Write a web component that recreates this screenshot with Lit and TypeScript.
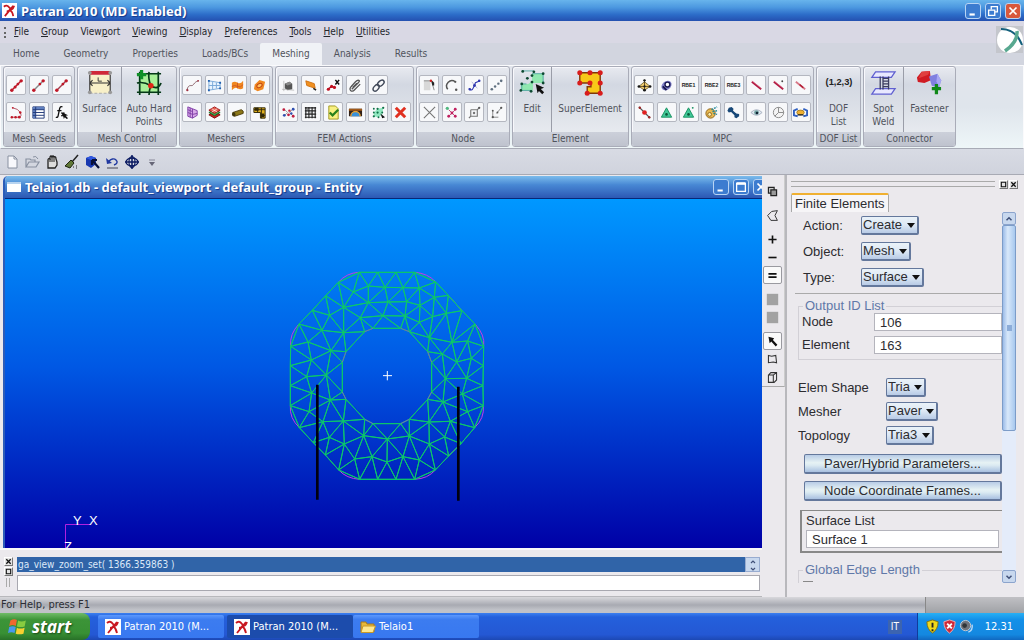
import { LitElement, html, svg, css, nothing } from "lit";
import { customElement, property } from "lit/decorators.js";
import { classMap } from "lit/directives/class-map.js";

const seed = (mid: string) => svg`<path d="M3 13L13 3" stroke=${mid} stroke-width="1.5"/><g fill="#c01828"><circle cx="3" cy="13" r="1.8"/><circle cx="13" cy="3" r="1.8"/><circle cx="9.5" cy="6.5" r="1.5"/></g>`;
const rod = svg`<path d="M3 4L13 12" stroke="#b01840" stroke-width="2"/><path d="M3 3L13 11" stroke="#e07890" stroke-width=".6"/>`;
const triangle = svg`<path d="M8 3L13.500 13H2.500Z" fill="#40c898" stroke="#189060"/><circle cx="8" cy="10" r="1.400" fill="#085838"/>`;
const rbe = (n: string) => svg`<text x="8" y="10" text-anchor="middle" font-size="5.500" font-weight="700" fill="#222">RBE${n}</text>`;

const icons: Record<string, unknown> = {
  seed1: svg`${seed("#c01828")}<circle cx="6.500" cy="9.500" r="1.600" fill="#c01828"/>`,
  seed2: seed("#888"),
  seed3: seed("#a04050"),
  seedCurve: svg`<path d="M4 3Q10 4 12 8T11 13H3" fill="none" stroke="#b05060"/><g fill="#c01828"><circle cx="4" cy="3" r="1"/><circle cx="12" cy="8" r="1.300"/><circle cx="11" cy="13" r="1.500"/><circle cx="7" cy="13" r="1.300"/><circle cx="3" cy="13" r="1.300"/></g>`,
  table: svg`<path d="M2 2H14V14H2Z" fill="#fff" stroke="#203878"/><path d="M2 2H14V5H2ZM2 5H5V14H2Z" fill="#6080c0"/><path d="M2 5H14M2 8H14M2 11H14M5 2V14" stroke="#203878"/>`,
  fx: svg`<path d="M9 2Q6.500 1 6 4L4.500 11Q4 14 2 13M3.500 6H8M8 8L11 12M11 8L8 12" fill="none" stroke="#111" stroke-width="1.400"/><path d="M9 8L15 11L12.500 11.500L15 14L13.500 15L11.500 13L10.500 15Z" fill="#111"/>`,
  curve: svg`<path d="M2 13C4 5 7 10 9 7S12 4 14 3" fill="none" stroke="#886068"/><circle cx="2.500" cy="13" r="1.200" fill="#a03040"/><circle cx="14" cy="3" r="1" fill="#a03040"/>`,
  meshBlue: svg`<path d="M2 3L14 5V11L2 13ZM6 4V12M10 5V11M2 8H14" fill="#e8f4ff" stroke="#78a8d8"/><path d="M1 2h2v2H1ZM13 4h2v2h-2ZM13 10h2v2h-2ZM1 12h2v2H1Z" fill="#2060b0"/>`,
  sheet: svg`<path d="M2 5Q5 3 8 5T14 3V11Q11 13 8 11T2 13Z" fill="#f08820"/><path d="M2 9Q5 7 8 9T14 7M8 5V11" stroke="#d05820" fill="none"/>`,
  sheet2: svg`<path d="M3 7L8 2L14 4L12 12L6 14L2 12Z" fill="#f08820"/><ellipse cx="8" cy="8" rx="3" ry="2" fill="#ffc060" stroke="#c04010" transform="rotate(-30 8 8)"/>`,
  extrude: svg`<path d="M3 2L8 4V14L3 12ZM8 4L13 6V11L8 14" fill="#d8a8e8" stroke="#8040a8"/><path d="M3 5L8 7M3 8L8 10L13 9M5.500 3V13" stroke="#8040a8"/>`,
  layers: svg`<path d="M8 7L14 10.500L8 14L2 10.500Z" fill="#c82020" stroke="#801010"/><path d="M8 4.500L14 8L8 11.500L2 8Z" fill="#40a850" stroke="#186020"/><path d="M8 2L14 5.500L8 9L2 5.500Z" fill="#e86050" stroke="#a01818"/><path d="M5 4L11 7.500M11 4L5 7.500" stroke="#fff" stroke-width=".7"/>`,
  tube: svg`<path d="M3 8L12 5Q15 6 14 9L5 12Q2 11 3 8Z" fill="#8c7818" stroke="#504010"/><ellipse cx="4" cy="10" rx="1.800" ry="2.200" fill="#403810"/>`,
  bracket: svg`<path d="M2 3H14V14H9V8H2Z" fill="#e0b020" stroke="#302808"/><path d="M2 5H14M6 3V8M10 3V14M9 11H14" stroke="#302808"/><path d="M3 3H7V6H3ZM10 9H13V13H10Z" fill="#302808"/>`,
  cube: svg`<path d="M4 6L9 4L12 6V12L7 13L4 11Z" fill="#555"/><path d="M4 6L9 4L12 6L7 8Z" fill="#888"/><path d="M3 3V14M1 12L14 13" stroke="#aaa" stroke-width=".7"/>`,
  plate: svg`<path d="M3 3L12 6L13 11L4 8Z" fill="#f09020" stroke="#d07010"/><path d="M11 11L14 13" stroke="#222" stroke-width="1.500"/>`,
  moveNode: svg`<path d="M2 12L6 9L9 10" stroke="#a01020" stroke-width="1.500" fill="none"/><g fill="#c01020"><circle cx="2.500" cy="12" r="1.700"/><circle cx="6" cy="9" r="1.700"/><circle cx="9" cy="10" r="1.700"/></g><path d="M10 2L14 7M14 2L10 7" stroke="#111" stroke-width="1.600"/>`,
  clip: svg`<path d="M4 12L11 5Q13 3 11.500 2.500T8 4L3.500 9Q1 12 3 13.500T7 12.500L13 6.500M5 10L9.500 5.500" fill="none" stroke="#555" stroke-width="1.400"/>`,
  link: svg`<ellipse cx="5.500" cy="10.500" rx="4" ry="2.500" transform="rotate(-50 5.500 10.500)" fill="none" stroke="#404858" stroke-width="1.500"/><ellipse cx="10.500" cy="5.500" rx="4" ry="2.500" transform="rotate(-40 10.500 5.500)" fill="none" stroke="#404858" stroke-width="1.500"/>`,
  scatter: svg`<path d="M4 5L7 8L4 11M12 5L9 8L12 11" stroke="#999" fill="none"/><g fill="#c02040"><circle cx="3" cy="5" r="1.500"/><circle cx="8" cy="10.500" r="1.500"/><circle cx="13" cy="12" r="1.500"/><circle cx="9" cy="6" r="1.300"/></g><g fill="#3050b0"><circle cx="13" cy="4.500" r="1.500"/><circle cx="3.500" cy="11" r="1.500"/><circle cx="11" cy="9" r="1.300"/></g>`,
  grid: svg`<path d="M3 2V14M6.300 2V14M9.700 2V14M13 2V14M2 3H14M2 6.300H14M2 9.700H14M2 13H14" stroke="#222" stroke-width="1.200"/><path d="M4 4h1v1H4ZM8 8h1v1H8Z" fill="#222"/>`,
  docCheck: svg`<path d="M3 1H10L13 4V15H3Z" fill="#f8f080" stroke="#a09820"/><path d="M4 8L7 11L13 5" fill="none" stroke="#28801c" stroke-width="2.400"/>`,
  rainbow: svg`<path d="M1 4H15V12H1Z" fill="#302018"/><path d="M3 12A5 5 0 0 1 13 12Z" fill="#3890d8"/><path d="M3 12A5 5 0 0 1 13 12" fill="none" stroke="#e8a030" stroke-width="1.500"/><path d="M1 4H15V6H1Z" fill="#a05818"/>`,
  cluster: svg`<path d="M3 8L7 4L13 3L12 10L8 13L3 12Z" fill="#90e8c0"/><g fill="#107048"><circle cx="3" cy="4" r="1"/><circle cx="7" cy="4" r="1.200"/><circle cx="13" cy="3" r="1.200"/><circle cx="3" cy="8" r="1"/><circle cx="7" cy="8" r="1.200"/><circle cx="12" cy="8" r="1"/><circle cx="3" cy="12" r="1.200"/><circle cx="8" cy="13" r="1"/></g><path d="M10 9L15 13L12 14Z" fill="#111"/>`,
  del: svg`<path d="M3 3L13 13M13 3L3 13" stroke="#e03020" stroke-width="3.200"/>`,
  nodeEdit: svg`<path d="M2 3H9V13H2Z" fill="#d8d8d8"/><path d="M2 3H10L13 13" stroke="#888" fill="none"/><path d="M10 2L13 5V8L11 8Z" fill="#222"/><circle cx="9.500" cy="3" r="1.300" fill="#d02020"/>`,
  arc: svg`<path d="M12 4Q8 1 4.500 4.500T4 12" fill="none" stroke="#555" stroke-width="1.600"/><circle cx="13" cy="12.500" r="1.300" fill="#555"/><circle cx="12" cy="4" r="1.200" fill="#555"/>`,
  spline: svg`<path d="M2 11Q5 15 7 10T9 5T14 3" fill="none" stroke="#3038b0" stroke-width="1.200"/><path d="M5 4L11 11" stroke="#99c" stroke-width=".7"/><g fill="#3038b0"><circle cx="3" cy="12" r="1.300"/><circle cx="8" cy="8" r="1.500"/><circle cx="13" cy="3" r="1.300"/></g>`,
  dots: svg`<g fill="#607080"><circle cx="3" cy="12" r="1.400"/><circle cx="6.500" cy="9" r="1.300"/><circle cx="10" cy="6" r="1.300"/><circle cx="13" cy="3" r="1.400"/></g>`,
  cross: svg`<path d="M2 2L14 14M14 2L2 14" stroke="#777" stroke-width="1.200"/>`,
  project: svg`<path d="M5 5L12 12M12 5L5 12" stroke="#c04070"/><g fill="#c02060"><circle cx="12" cy="4.500" r="1.500"/><circle cx="5" cy="12" r="1.500"/><circle cx="12" cy="12" r="1.500"/><circle cx="8.500" cy="8.500" r="1.500"/></g><circle cx="3.500" cy="3.500" r="1.700" fill="#50b880"/>`,
  surfNode: svg`<path d="M4 5H11L13 3M11 5V12H4V5M4 12L2 14" fill="none" stroke="#777" stroke-width="1.200"/><circle cx="7.500" cy="8.500" r="1.300" fill="#777"/><circle cx="13" cy="3" r="1.200" fill="#555"/>`,
  paramNode: svg`<path d="M4 6V13H10M8 9L13 3" fill="none" stroke="#888"/><g fill="#555"><circle cx="13" cy="3" r="1.200"/><circle cx="9" cy="8" r="1"/><circle cx="4" cy="13" r="1.200"/><circle cx="4" cy="6" r="1"/></g>`,
  diamond: svg`<path d="M8 4L14 9L8 13L2 9Z" fill="#f0cc70" stroke="#605020" stroke-width=".8"/><path d="M2 9H14M8 2V13" stroke="#403010" stroke-width=".8"/><g fill="#181818"><circle cx="2" cy="9" r="1.400"/><circle cx="14" cy="9" r="1.400"/><circle cx="8" cy="13" r="1.500"/><circle cx="8" cy="2.500" r="1.300"/><circle cx="8" cy="9" r="1.200"/></g>`,
  ring: svg`<ellipse cx="8" cy="8" rx="6" ry="4.500" transform="rotate(-40 8 8)" fill="#8080c8"/><circle cx="9" cy="7" r="2.600" fill="#fff" stroke="#181850" stroke-width="1.500"/><path d="M4 9L8 13" stroke="#181850" stroke-width="2"/>`,
  rbe1: rbe("1"), rbe2: rbe("2"), rbe3: rbe("3"),
  rod, rod2: svg`${rod}<circle cx="12" cy="3.500" r="1" fill="#444"/>`,
  rod3: svg`<path d="M3 4L13 12" stroke="#d87888" stroke-width="2"/><path d="M7 7L11 10.500" stroke="#b01830" stroke-width="1.500"/>`,
  link2: svg`<path d="M2 2L14 14" stroke="#555" stroke-width="1.500"/><circle cx="8" cy="8" r="2.500" fill="#e02020"/><circle cx="3" cy="3" r="1.300" fill="#a02828"/><circle cx="13" cy="13" r="1.300" fill="#a02828"/>`,
  tri1: triangle, tri2: svg`${triangle}<circle cx="12.500" cy="3" r="1" fill="#189060"/>`,
  gear: svg`<circle cx="7" cy="9" r="5" fill="#e8b850" stroke="#906820"/><circle cx="6" cy="10" r="2" fill="#fff0b0" stroke="#906820"/><path d="M8 5L14 2M9 7L15 6M10 9L14 10" stroke="#20889c" stroke-width="1.500" stroke-dasharray="2 1"/>`,
  bolt: svg`<path d="M3 3L6 2L8 4L7.500 6L11 9L14 9.500L14 12L11 14L9 13L9 11L5.500 7.500L3 8L1.500 6Z" fill="#184878"/>`,
  eye: svg`<path d="M2 8Q8 2 14 8Q8 14 2 8Z" fill="#e0e8f0" stroke="#a8b0c0"/><circle cx="8" cy="8" r="2.500" fill="#70a0a0"/><circle cx="8.500" cy="8.500" r="1.300" fill="#123"/>`,
  dial: svg`<circle cx="8" cy="8" r="5.500" fill="#f4f4f4" stroke="#888"/><path d="M8 2.500V8H13.500M8 8L4 12" stroke="#888" fill="none"/>`,
  joint: svg`<path d="M5 4L1 6V11L5 12M11 4L15 6V11L11 12" fill="none" stroke="#3060c0" stroke-width="2"/><ellipse cx="8" cy="8" rx="4" ry="2.600" fill="#f0b030" stroke="#907020" stroke-width=".8"/><path d="M5 10.500H11" stroke="#222" stroke-width="1.200"/>`,

  surface: svg`<path d="M3 5H25V25H3Z" fill="#f8f0c8"/><path d="M3 3H25" stroke="#d02838" stroke-width="4"/><path d="M3 5V25M25 5V25M3 14H25M6 11L3 14L6 17M22 11L25 14L22 17" fill="none" stroke="#333" stroke-width="1.200"/><path d="M3 25H25" stroke="#aaa" stroke-width="1.200" stroke-dasharray="3 2"/><path d="M12 8V12H16" stroke="#333" fill="none"/><g fill="#999"><circle cx="3" cy="3" r="2"/><circle cx="25" cy="3" r="2"/><circle cx="3" cy="24" r="2"/><circle cx="25" cy="24" r="2"/></g>`,
  hardpoint: svg`<path d="M3 4H25V25H3Z" fill="#a8f098"/><path d="M4 2V27M24 2V27M14 2Q13 10 16 17Q14 22 14 27M1 4H27M1 24H27M1 14Q8 12 16 17T27 14" fill="none" stroke="#053818" stroke-width="1.800"/><circle cx="16" cy="17" r="3" fill="#e02818"/><path d="M6 0V10M1 5H11" stroke="#109028" stroke-width="3.500"/>`,
  edit: svg`<path d="M14 4H26V14H14ZM2 15H10L15 11V22H2Z" fill="#90e8b0"/><path d="M4 1H16M14 4H26V14M2 15H8M3 15V22H14" fill="none" stroke="#50a8a0"/><g fill="#0c4830"><circle cx="4" cy="1.500" r="1.500"/><circle cx="16" cy="2" r="1.500"/><circle cx="26" cy="4" r="1.500"/><circle cx="14" cy="6" r="1.500"/><circle cx="9" cy="9" r="1.500"/><circle cx="26" cy="14" r="1.500"/><circle cx="3" cy="15" r="1.500"/><circle cx="14" cy="13" r="1.500"/><circle cx="2" cy="22" r="1.500"/><circle cx="13" cy="23" r="1.500"/></g><path d="M18 15L27 19L23.500 20.500L27 24L25 26L21.500 22.500L20 25Z" fill="#101010"/>`,
  superEl: svg`<path d="M3 3H25V25H11V18H15V14H3Z" fill="#f8c818" stroke="#803808" stroke-width="1.500"/><g fill="#d81c1c"><circle cx="3" cy="3" r="2.700"/><circle cx="14" cy="3" r="2.700"/><circle cx="25" cy="3" r="2.700"/><circle cx="3" cy="14" r="2.700"/><circle cx="14" cy="14" r="2.700"/><circle cx="25" cy="14" r="2.700"/><circle cx="11" cy="25" r="2.700"/><circle cx="25" cy="25" r="2.700"/></g>`,
  dof: svg`<text x="14" y="16" text-anchor="middle" font-size="10" font-weight="700" fill="#222">(1,2,3)</text>`,
  weld: svg`<path d="M6 2H27L23 8H2ZM6 20H27L23 26H2Z" fill="#e8e8ff" stroke="#6060d0" stroke-width="1.400"/><path d="M11 7V21M14 7V21M20 7V21M14 9H20M14 12H20M14 15H20M14 18H20" stroke="#3c3c60" stroke-width="1.400"/>`,
  fastener: svg`<path d="M1 8L6 2L15 1L16 11L9 14L2 13Z" fill="#d01c24"/><path d="M6 2L15 1L13 5L3 9Z" fill="#e04040"/><path d="M14 7L23 4L27 11L25 19L17 17Z" fill="#8080e0"/><path d="M23 4L27 11L25 19L22 12Z" fill="#a8a8f4"/><path d="M22 15V26M17 20H27" stroke="#108818" stroke-width="3.500"/>`,

  newDoc: svg`<path d="M4 2H10L13 5V14H4Z" fill="#f8f8fc" stroke="#8890a0"/><path d="M10 2V5H13" fill="none" stroke="#8890a0"/>`,
  open: svg`<path d="M2 13V5H6L7 6H11V8M2 13L5 8H15L12 13Z" fill="none" stroke="#8890a0" stroke-width="1.200"/><path d="M9 3Q12 1 14 5" fill="none" stroke="#8890a0"/>`,
  hand: svg`<path d="M4 14V6Q4 4 6 5V3Q7 1 8 3Q9 1 10 3Q12 2 12 5L13 8V11L11 14Z" fill="#ddd" stroke="#222" stroke-width="1.300"/><path d="M6 5V8M8 3V8M10 3V8" stroke="#222"/>`,
  broom: svg`<path d="M14 1L8 8" stroke="#222" stroke-width="1.500"/><path d="M7 6L10 9L6 14L1 12Z" fill="#607838" stroke="#1c2410"/><path d="M9 13h1M12 12h1M12 14h1" stroke="#222"/>`,
  refresh: svg`<path d="M2 4L7 2L12 4V10L7 14L2 11Z" fill="#1838b0"/><path d="M2 4L7 6L12 4L7 2Z" fill="#3058e0"/><path d="M8 6L15 14M8 6V11M8 6H13" stroke="#081038" stroke-width="2.200"/>`,
  undo: svg`<path d="M4 8Q9 3 12 6T10 11" fill="none" stroke="#2038a0" stroke-width="1.400"/><path d="M2 4L3 10L8 9Z" fill="#2038a0"/><path d="M3 14H14" stroke="#445" />`,
  globe: svg`<ellipse cx="8" cy="8" rx="6" ry="4" fill="none" stroke="#081860" stroke-width="1.300"/><ellipse cx="8" cy="8" rx="3" ry="5.500" fill="none" stroke="#081860" stroke-width="1.200"/><path d="M1 8H15M8 1V15" stroke="#081860" stroke-width="1.500"/>`,
  more: svg`<path d="M5 8H11L8 12Z" fill="#667"/><path d="M5 6H11" stroke="#889"/>`,

  copy: svg`<path d="M3 3H10V10H3Z" fill="#ccc" stroke="#222" stroke-width="1.500"/><path d="M6 6H13V13H6Z" fill="#999" stroke="#222" stroke-width="1.500"/>`,
  poly: svg`<path d="M7 3L14 2L11 8L14 14H6L2 8Z" fill="none" stroke="#333" stroke-width="1.200"/>`,
  plus: svg`<path d="M8 3V13M3 8H13" stroke="#111" stroke-width="2"/>`,
  minus: svg`<path d="M3 8H13" stroke="#111" stroke-width="2"/>`,
  equals: svg`<path d="M3 6H13M3 10H13" stroke="#111" stroke-width="2"/>`,
  block: svg`<path d="M1 1H15V15H1Z" fill="#a2a2a2"/>`,
  arrow: svg`<path d="M3 2L10 4L8.500 6L14 12L12 14L6.500 8L4.500 10Z" fill="#111"/>`,
  flag: svg`<path d="M3 3L7 4L12 3L13 12L9 11L3 12Z" fill="none" stroke="#333" stroke-width="1.300"/>`,
  box: svg`<path d="M3 5L6 2H13V11L10 14H3ZM3 5H9L13 2M9 5V14" fill="none" stroke="#333" stroke-width="1.300"/>`,

  app: svg`<path d="M0 0H16V16H0Z" fill="#fff"/><path d="M2 4Q5 1 8 5T13 3M12 3L3 14M8 7Q11 9 12 14M5 9Q8 9 9 6" fill="none" stroke="#c81820" stroke-width="1.900"/>`,
  folder: svg`<path d="M1 3H6L7 5H14V13H1Z" fill="#e8b838" stroke="#a87818"/><path d="M3 7H15.500L13 13.500H1Z" fill="#ffe890" stroke="#c89828"/>`,
  shieldY: svg`<path d="M8 1L14 3Q14 11 8 15Q2 11 2 3Z" fill="#f0d818" stroke="#807010"/><path d="M8 4V9M8 11V13" stroke="#222" stroke-width="2"/>`,
  shieldR: svg`<path d="M8 1L14 3Q14 11 8 15Q2 11 2 3Z" fill="#d02838" stroke="#f0b0b0"/><path d="M5.500 5L10.500 10M10.500 5L5.500 10" stroke="#fff" stroke-width="2"/>`,
  sound: svg`<circle cx="7" cy="7" r="5.500" fill="#70747c" stroke="#c8ccd4"/><circle cx="6" cy="7" r="2.500" fill="#303438"/><path d="M10 14Q15 12 14 6" stroke="#b8d8f8" fill="none" stroke-width="1.500"/>`,
  windows: svg`<path d="M2 3Q5 1 7.500 2.500L6.500 7.500Q4 6 1 7.500Z" fill="#f06830"/><path d="M8.500 3Q11 4.500 15 3L14 8Q10.500 9 7.500 8Z" fill="#88cc40"/><path d="M1 8.500Q4 7 6.500 8.500L5.500 13.500Q3 12 0 13.500Z" fill="#4898f0"/><path d="M7.500 9Q10 10.500 14 9L13 14Q9.500 15 6.500 14Z" fill="#f8d030"/>`,
  min: svg`<path d="M4 12H10" stroke="#fff" stroke-width="2.500"/>`,
  max: svg`<path d="M3 4H13V13H3Z" fill="none" stroke="#fff" stroke-width="1.500"/><path d="M3 4H13" stroke="#fff" stroke-width="3"/>`,
  restore: svg`<path d="M6 6V3H13V9H10M3 7H10V13H3Z" fill="none" stroke="#fff" stroke-width="1.500"/>`,
  close: svg`<path d="M4 4L12 12M12 4L4 12" stroke="#fff" stroke-width="2"/>`,
  closeDark: svg`<path d="M3 3L13 13M13 3L3 13" stroke="#111" stroke-width="3"/>`,
  boxDark: svg`<path d="M3 3H13V13H3Z" fill="none" stroke="#111" stroke-width="2.500"/>`,
  up: svg`<path d="M4 10L8 6L12 10" fill="none" stroke="#405078" stroke-width="2.400"/>`,
  down: svg`<path d="M4 6L8 10L12 6" fill="none" stroke="#405078" stroke-width="2.400"/>`,
};

const icon = (name: string, size = 16, box = 16) =>
  html`<svg class="icon" width=${size} height=${size} viewBox="0 0 ${box} ${box}" fill="none" aria-hidden="true">${icons[name]}</svg>`;

const base = css`
  * { box-sizing: border-box; }
  button, input, select { font: inherit; color: inherit; margin: 0; padding: 0; border: 0; background: none; border-radius: 0; }
  .icon { display: block; flex: none; overflow: visible; font-family: "Liberation Sans", Arial, sans-serif; }
`;

type Point = [number, number];
const outer: Point[] = [[238,37],[293,37],[348,37],[404,37],[467,66],[505,106],[546,152],[585,192],[611,259],[610,317],[609,377],[610,437],[584,503],[543,551],[506,588],[466,630],[404,658],[348,658],[293,658],[239,658],[176,630],[136,585],[100,548],[58,503],[31,437],[31,377],[31,317],[32,259],[57,192],[97,151],[137,107],[175,67]];
const inner: Point[] = [[279,205],[362,205],[388,215],[443,275],[455,307],[455,396],[443,418],[388,478],[362,491],[279,491],[254,478],[198,418],[187,396],[187,307],[198,275],[254,215]];
const middle: Point[] = [[265,78],[315,82],[369,83],[418,84],[220,96],[463,112],[191,142],[265,128],[324,126],[380,125],[420,136],[499,160],[149,166],[241,173],[309,167],[375,168],[418,187],[458,170],[126,211],[191,218],[84,246],[153,272],[94,300],[139,345],[80,350],[151,420],[95,399],[87,455],[129,485],[190,483],[148,532],[193,552],[251,527],[322,537],[388,528],[448,552],[447,486],[494,531],[511,484],[563,455],[489,426],[547,402],[496,356],[560,355],[530,306],[574,295],[487,282],[563,243],[516,247],[448,233],[276,590],[321,606],[369,590],[224,597],[418,600]];

/** Incremental Delaunay triangulation; returns vertex index triples. */
function triangulate(input: Point[]): number[][] {
  const n = input.length;
  const pts: Point[] = [...input.map(([x, y], i): Point => [x + (i % 7) * 0.01, y + (i % 5) * 0.01]), [-9000, -9000], [9000, -9000], [0, 12000]];
  const inCircle = (t: number[], p: Point) => {
    const [[ax, ay], [bx, by], [cx, cy]] = t.map((i) => pts[i]);
    const d = 2 * (ax * (by - cy) + bx * (cy - ay) + cx * (ay - by));
    const a = ax * ax + ay * ay, b = bx * bx + by * by, c = cx * cx + cy * cy;
    const ux = (a * (by - cy) + b * (cy - ay) + c * (ay - by)) / d;
    const uy = (a * (cx - bx) + b * (ax - cx) + c * (bx - ax)) / d;
    return (p[0] - ux) ** 2 + (p[1] - uy) ** 2 < (ax - ux) ** 2 + (ay - uy) ** 2;
  };
  let tris: number[][] = [[n, n + 1, n + 2]];
  for (let i = 0; i < n; i++) {
    const edges = new Map<string, number[]>();
    tris = tris.filter((t) => {
      if (!inCircle(t, pts[i])) return true;
      for (const [a, b] of [[t[0], t[1]], [t[1], t[2]], [t[2], t[0]]]) {
        const key = a < b ? `${a}-${b}` : `${b}-${a}`;
        edges.has(key) ? edges.delete(key) : edges.set(key, [a, b]);
      }
      return false;
    });
    edges.forEach(([a, b]) => tris.push([a, b, i]));
  }
  return tris.filter((t) => t.every((v) => v < n));
}

const loop = (p: Point[]) => `M${p.map((q) => q.join(" ")).join("L")}Z`;
function meshPath(): string {
  const all = [...outer, ...inner, ...middle];
  const o = outer.length, i = o + inner.length;
  return triangulate(all)
    .filter((t) => !t.every((v) => v < o) && !t.every((v) => v >= o && v < i))
    .map((t) => loop(t.map((v) => all[v])))
    .join("") + loop(outer) + loop(inner);
}

@customElement("mesh-viewport")
class MeshViewport extends LitElement {
  static styles = css`
    :host { display: block; overflow: hidden; background: linear-gradient(#0098ff, #0058e4 48%, #0000a6); }
    svg { display: block; width: 100%; height: 100%; }
    text { font: 13px "Liberation Sans", Arial, sans-serif; fill: #fff; }
  `;
  render() {
    return html`<svg fill="none" role="img" aria-label="Surface mesh">
      <g transform="translate(275 61) scale(.3333)" stroke-width="3">
        <path stroke="#c040e0" d="M238 37Q200 38 175 67M404 37Q444 40 467 66M505 106L546 152M585 192Q616 225 611 259M610 437Q614 475 584 503M543 551L506 588M466 630Q444 656 404 658M239 658Q200 656 176 630M58 503Q28 475 31 437M32 259Q28 222 57 192"/>
        <path stroke="#0cc868" d=${meshPath()}/>
        <path stroke="#a040e0" stroke-width="2" d="M279 205L254 215M362 205L388 215M443 275L455 307M455 396L443 418M388 478L362 491M279 491L254 478M198 418L187 396M187 307L198 275"/>
        <path stroke="#fff" d="M309 347H336M322 333V361"/>
        <path stroke="#000010" stroke-width="8" d="M112 374V719M535 380V722"/>
      </g>
      <path stroke="#b020e0" d="M60.500 349V325.500H85"/>
      <text x="68" y="326">Y</text><text x="84" y="326">X</text><text x="59" y="352">Z</text>
    </svg>`;
  }
}

interface Big { icon: string; lines: string[] }
interface Group { title: string; width: number; rows?: string[][]; big?: Big[] }
const groups: Group[] = [
  { title: "Mesh Seeds", width: 72, rows: [["seed1", "seed2", "seed3"], ["seedCurve", "table", "fx"]] },
  { title: "Mesh Control", width: 100, big: [{ icon: "surface", lines: ["Surface"] }, { icon: "hardpoint", lines: ["Auto Hard", "Points"] }] },
  { title: "Meshers", width: 94, rows: [["curve", "meshBlue", "sheet", "sheet2"], ["extrude", "layers", "tube", "bracket"]] },
  { title: "FEM Actions", width: 139, rows: [["cube", "plate", "moveNode", "clip", "link", ""], ["scatter", "grid", "docCheck", "rainbow", "cluster", "del"]] },
  { title: "Node", width: 94, rows: [["nodeEdit", "arc", "spline", "dots"], ["cross", "project", "surfNode", "paramNode"]] },
  { title: "Element", width: 117, big: [{ icon: "edit", lines: ["Edit"] }, { icon: "superEl", lines: ["SuperElement"] }] },
  { title: "MPC", width: 183, rows: [["diamond", "ring", "rbe1", "rbe2", "rbe3", "rod", "rod2", "rod3"], ["link2", "tri1", "tri2", "gear", "bolt", "eye", "dial", "joint"]] },
  { title: "DOF List", width: 45, big: [{ icon: "dof", lines: ["DOF", "List"] }] },
  { title: "Connector", width: 93, big: [{ icon: "weld", lines: ["Spot", "Weld"] }, { icon: "fastener", lines: ["Fastener"] }] },
];

@customElement("ribbon-group")
class RibbonGroup extends LitElement {
  @property({ attribute: false }) group!: Group;
  static styles = [base, css`
    :host { display: flex; flex-direction: column; height: 81px; border: 1px solid #a9acb8; border-radius: 3px; overflow: hidden;
      background: linear-gradient(#e8eaf0, #d3d8e2 22%, #dde1e8 55%, #edf0f4); box-shadow: inset 1px 1px 0 #f8f8fc; }
    .body { flex: 1; min-height: 0; display: flex; }
    .grid { flex: 1; display: grid; grid-auto-rows: 20px; row-gap: 7px; padding: 8px 1px 0; justify-items: center; }
    .tool { width: 20px; height: 20px; display: grid; place-items: center; border: 1px solid #b4b7c0; border-radius: 2px; background: #f7f8fa; }
    .big { flex: 1 1 auto; display: flex; flex-direction: column; align-items: center; padding: 3px 2px 0; gap: 4px; line-height: 13px; }
    .big + .big { border-left: 1px solid #9a9da8; }
    .lines { display: block; text-align: center; white-space: nowrap; padding-top: 2px; }
    .line { display: block; }
    .title { height: 14px; line-height: 14px; text-align: center; white-space: nowrap; background: linear-gradient(#ccd0da, #bfc3ce); }
  `];
  render() {
    const { title, rows, big } = this.group;
    return html`<div class="body">
      ${rows ? html`<div class="grid" style="grid-template-columns:repeat(${rows[0].length},1fr)">
        ${rows.flat().map((n) => n ? html`<button class="tool" aria-label=${n}>${icon(n, 15)}</button>` : html`<span></span>`)}</div>` : nothing}
      ${big?.map((b) => html`<button class="big">${icon(b.icon, 26, 28)}<span class="lines">${b.lines.map((l) => html`<span class="line">${l}</span>`)}</span></button>`)}
    </div><div class="title">${title}</div>`;
  }
}

@customElement("form-panel")
class FormPanel extends LitElement {
  static styles = [base, css`
    :host { display: flex; flex-direction: column; min-height: 0; padding: 2px 8px 0 4px; background: #ebe9ed; border-left: 2px solid #b8b8bc;
      font: 13px/16px "Liberation Sans", Arial, sans-serif; color: #2c2c30; }
    .grip { display: flex; align-items: center; gap: 1px; height: 14px; margin-right: -2px; }
    .rails { flex: 1; height: 6px; border: solid #aaa; border-width: 1px 0; margin-right: 3px; }
    .mini { width: 9px; height: 9px; display: grid; place-items: center; background: #e4e4e4; border: 1px solid; border-color: #fff #777 #777 #fff; }
    .tab { align-self: flex-start; height: 19px; margin-top: 2px; padding: 0 3px; border: 1px solid #a8a8a8; border-top: 2px solid #f0b030; border-bottom: 0; background: #f6f5f7; border-radius: 2px 2px 0 0; }
    .scroll { flex: 1; min-height: 0; display: flex; margin-bottom: 14px; }
    .form { flex: 1; min-width: 0; overflow: hidden; padding-left: 7px; }
    .top { display: grid; gap: 8px; padding: 4px 0 7px 8px; border-bottom: 1px solid #aaa; margin-left: -3px; }
    .row { display: grid; grid-template-columns: 58px auto; justify-content: start; align-items: center; height: 18px; }
    .mid { display: grid; gap: 5px; padding: 18px 0 9px; }
    .mid .row { grid-template-columns: 88px auto; height: 19px; }
    .pick { display: inline-grid; align-items: center; }
    .pick > * { grid-area: 1 / 1; }
    .pick .caret { justify-self: end; margin-right: 4px; pointer-events: none; }
    select { appearance: none; height: 19px; padding: 0 14px 0 1px; border: 1px solid #64789c; border-right-width: 2px; border-bottom-width: 2px; border-radius: 2px; background: linear-gradient(#eaf2f8, #dde8f4 50%, #b8cbe6); }
    fieldset { margin: 5px 0 0; padding: 0; min-width: 0; border: 1px solid #d2d0d6; border-right: 0; }
    legend { margin-left: 4px; padding: 0 2px; height: 14px; line-height: 14px; color: #6078a8; }
    .field { display: grid; grid-template-columns: 72px 1fr; align-items: center; padding-left: 3px; height: 18px; margin-bottom: 5px; }
    label { white-space: nowrap; }
    input { width: 100%; height: 18px; padding: 0 5px; background: #fff; border: 1px solid #b4b4bc; }
    .wide { display: block; width: calc(100% - 6px); margin: 0 0 7px 6px; height: 20px; border: 1px solid #64789c; border-bottom-width: 2px; border-right-width: 2px; border-radius: 2px; background: linear-gradient(#b8cce6, #e6f2f4 45%, #dcebf2 60%, #a8c0e0); }
    .list { margin: 9px 0 0 2px; padding: 1px 3px 3px 4px; border: 1px solid #888; border-left-width: 2px; border-bottom-width: 2px; border-right: 0; }
    .list label { display: block; height: 18px; line-height: 18px; }
    .edge { margin-top: 10px; height: 40px; }
    .dash { width: 10px; margin: 4px 0 0 4px; border-top: 1px solid #888; }
    .bar { width: 14px; display: flex; flex-direction: column; background: #e4ecfa; }
    .end { height: 13px; display: grid; place-items: center; background: #c8d8ee; border: 1px solid #8ca4cc; border-radius: 2px; }
    .thumb { flex: 0 1 206px; background: linear-gradient(90deg, #9cbce8, #d8e8fa 40%, #a8c8ee); border: 1px solid #7c9cc8; border-radius: 2px; display: grid; place-items: center; }
    .ridge { width: 5px; height: 6px; background: #8cacd8; }
    .track { flex: 1; }
  `];
  pick(label: string, value: string) {
    const id = label.replace(/\W/g, "");
    return html`<div class="row"><label for=${id}>${label}</label><span class="pick"><select id=${id}><option>${value}</option></select><svg class="caret" width="8" height="6" aria-hidden="true"><path d="M0 0H8L4 5Z" fill="#111"/></svg></span></div>`;
  }
  field(label: string, value: string) {
    return html`<div class="field"><label for=${label}>${label}</label><input id=${label} .value=${value}></div>`;
  }
  render() {
    return html`
      <div class="grip"><span class="rails"></span><button class="mini" aria-label="Float">${icon("boxDark", 7)}</button><button class="mini" aria-label="Close">${icon("closeDark", 7)}</button></div>
      <button class="tab">Finite Elements</button>
      <div class="scroll">
        <div class="form">
          <div class="top">${this.pick("Action:", "Create")}${this.pick("Object:", "Mesh")}${this.pick("Type:", "Surface")}</div>
          <fieldset><legend>Output ID List</legend>${this.field("Node", "106")}${this.field("Element", "163")}</fieldset>
          <div class="mid">${this.pick("Elem Shape", "Tria")}${this.pick("Mesher", "Paver")}${this.pick("Topology", "Tria3")}</div>
          <button class="wide">Paver/Hybrid Parameters...</button>
          <button class="wide">Node Coordinate Frames...</button>
          <div class="list"><label for="surf">Surface List</label><input id="surf" .value=${"Surface 1"}></div>
          <fieldset class="edge"><legend>Global Edge Length</legend><div class="dash"></div></fieldset>
        </div>
        <div class="bar"><button class="end" aria-label="Scroll up">${icon("up", 10)}</button><div class="thumb"><span class="ridge"></span></div><div class="track"></div><button class="end" aria-label="Scroll down">${icon("down", 10)}</button></div>
      </div>`;
  }
}

const menus = ["_File", "_Group", "View_port", "_Viewing", "_Display", "_Preferences", "_Tools", "_Help", "_Utilities"];
const tabs = ["Home", "Geometry", "Properties", "Loads/BCs", "Meshing", "Analysis", "Results"];
const quick = ["newDoc", "open", "hand", "broom", "refresh", "undo", "globe", "more"];
const sideTools: [string, boolean, boolean][] = [["copy", false, false], ["poly", true, false], ["plus", true, false], ["minus", false, false], ["equals", false, true], ["block", true, false], ["block", false, false], ["arrow", true, true], ["flag", false, false], ["box", false, false]];

@customElement("app-root")
class AppRoot extends LitElement {
  static styles = [base, css`
    :host { display: flex; flex-direction: column; height: 100vh; overflow: hidden; background: #d2d5df;
      font: 10px/14px "DejaVu Sans Condensed", "Noto Sans", Tahoma, sans-serif; color: #50535c; }
    .titlebar { display: flex; align-items: center; gap: 4px; height: 21px; padding: 0 3px 0 2px; color: #fff; text-shadow: 1px 1px 1px #14388c;
      background: linear-gradient(#68b4ec, #4c98e0 35%, #2c6cc8 70%, #2450b0); }
    .heading { flex: 1; min-width: 0; margin: 0; font: 700 13px/18px "Noto Sans", "Open Sans", sans-serif; white-space: nowrap; overflow: hidden; }
    .win { width: 16px; height: 16px; display: grid; place-items: center; border: 1px solid #b8d4f4; border-radius: 3px; background: #3c7cd0; }
    .danger { background: #d8583c; }
    .menu { display: flex; gap: 12px; align-items: center; height: 22px; padding-left: 4px; color: #24262c; background: #d9d8e4; }
    .dots { border-left: 2px dotted #666; height: 11px; margin-right: -4px; }
    .tabs { display: flex; height: 22px; padding-left: 1px; }
    .tab { padding: 0 12px; }
    .tab.on { background: #f0f2f6; border-radius: 2px 2px 0 0; }
    .emblem { position: absolute; top: 26px; right: 1px; background: #c4c6cc; }
    .ribbon { display: flex; gap: 2px; padding: 0 2px 1px 2px; border: 1px solid #fafafc; border-bottom-color: #a8abb6; background: linear-gradient(#e2e5ec, #dfe5ec 50%, #eef6f8); }
    .group { flex: 0 0 auto; }
    .quick { display: flex; align-items: center; gap: 4px; height: 25px; padding-left: 4px; background: linear-gradient(#d8dbe4, #d0d3dd); }
    .work { flex: 1; min-height: 0; display: flex; border-top: 1px solid #a8aab4; background: #ebe9ed; }
    .left { flex: 1; min-width: 0; display: flex; flex-direction: column; }
    .window { flex: 1; min-height: 0; margin: 1px 0 0 3px; display: flex; flex-direction: column; border-left: 2px solid #2c5cb8; border-radius: 5px 0 0 0; overflow: hidden; }
    .wtitle { display: flex; align-items: center; gap: 4px; height: 23px; padding-left: 2px; margin-right: -7px; color: #fff; text-shadow: 1px 1px 1px #14388c; border-bottom: 1px solid #082878;
      background: linear-gradient(#7cbcec, #4888d4 40%, #2c58b4); }
    .sheet { width: 14px; height: 10px; background: #fff; border-top: 2px solid #b8d4f0; }
    .canvas { flex: 1; min-height: 0; }
    .console { display: grid; grid-template-columns: 12px 1fr; gap: 3px; height: 49px; padding: 7px 2px 6px 2px; border-top: 2px solid #f8f8f8; border-bottom: 1px solid #b8b8bc; }
    .knobs { display: grid; align-content: start; justify-items: center; gap: 1px; }
    .mini { width: 9px; height: 9px; display: grid; place-items: center; background: #e4e4e4; border: 1px solid; border-color: #fff #777 #777 #fff; }
    .handle { width: 4px; height: 9px; border: solid #aaa; border-width: 0 1px; margin-top: 1px; }
    .lines { display: grid; gap: 3px; grid-template-rows: 15px 16px; min-width: 0; }
    .log { display: flex; background: #3064a8; color: #dce8f8; line-height: 15px; }
    .msg { flex: 1; padding-left: 1px; }
    .spin { width: 15px; display: grid; grid-template-rows: 1fr 1fr; background: #c8d8ee; border: 1px solid #98acd0; }
    .spin button { display: grid; place-items: center; overflow: hidden; }
    .cmd { width: 100%; background: #fff; border: 1px solid #a8a8b0; }
    .side { width: 23px; align-self: flex-start; display: flex; flex-direction: column; align-items: center; padding: 7px 2px 0 0; border-bottom: 1px solid #aaa; border-right: 1px solid #ccc; }
    .tool { width: 19px; height: 18px; display: grid; place-items: center; border: 1px solid transparent; border-radius: 2px; }
    .tool.gap { margin-top: 6px; }
    .tool.on { background: #fafafa; border-color: #9a9aa0; }
    .panel { flex: 0 0 239px; }
    .status { height: 16px; display: grid; grid-template-columns: 1fr 99px; font-size: 11px; line-height: 15px; color: #2c2e34; background: linear-gradient(#d8d8dc, #a8aab2 50%, #c0c2c8 80%); }
    .status > * { padding-left: 1px; }
    .cell { border-left: 1px solid #888; background: linear-gradient(#c0c0c4, #a0a2a6); }
    .taskbar { display: flex; height: 27px; color: #fff; font-size: 11px; background: linear-gradient(#3c80f0, #2460dc 15%, #2458d4 80%, #1c48b4); }
    .start { width: 90px; display: flex; align-items: center; gap: 5px; padding-left: 8px; margin-right: 8px; border-radius: 0 8px 8px 0; background: linear-gradient(#70bc68, #3c9438 25%, #389034 75%, #287028); font: italic 700 17px/20px "Open Sans", "Noto Sans", sans-serif; text-shadow: 1px 1px 2px #184818; }
    .task { flex: 0 1 126px; display: flex; align-items: center; gap: 3px; margin: 2px 0; padding-left: 7px; border-radius: 2px; background: linear-gradient(#5c98fc, #3c7cf0 20%, #3878f0); white-space: nowrap; }
    .task.on { background: #1c4cac; }
    .first { margin-right: 3px; }
    .lang { margin-left: auto; align-self: center; background: #3c64b0; padding: 0 3px; margin-right: 15px; line-height: 14px; font-size: 10px; }
    .tray { width: 107px; display: flex; align-items: center; gap: 2px; padding: 0 11px 0 7px; border-left: 1px solid #103c9c; background: linear-gradient(#28b0f4, #1490e8 25%, #1488e0 80%, #1068c0); }
    .clock { margin-left: auto; }
  `];

  menuItem(m: string) {
    const [a, b] = m.split("_");
    return html`<button>${a}<u>${b[0]}</u>${b.slice(1)}</button>`;
  }

  render() {
    return html`
      <header class="titlebar">${icon("app", 15)}<h1 class="heading">Patran 2010 (MD Enabled)</h1>
        <button class="win" aria-label="Minimize">${icon("min", 14)}</button><button class="win" aria-label="Restore">${icon("restore", 14)}</button><button class="win danger" aria-label="Close">${icon("close", 14)}</button></header>
      <nav class="menu"><span class="dots"></span>${menus.map((m) => this.menuItem(m))}</nav>
      <nav class="tabs">${tabs.map((t) => html`<button class=${classMap({ tab: true, on: t === "Meshing" })}>${t}</button>`)}</nav>
      <svg class="emblem" width="27" height="27" viewBox="0 0 27 27" fill="none" aria-hidden="true"><circle cx="14" cy="14" r="13" fill="#fff"/><path d="M5 3Q20 3 26 19" stroke="#14607c" stroke-width="2"/><path d="M21 5Q22 16 9 25" stroke="#58a890" stroke-width="3.500"/></svg>
      <section class="ribbon">${groups.map((g) => html`<ribbon-group class="group" style="width:${g.width}px" .group=${g}></ribbon-group>`)}</section>
      <div class="quick">${quick.map((q) => html`<button aria-label=${q}>${icon(q)}</button>`)}</div>
      <main class="work">
        <div class="left">
          <section class="window">
            <div class="wtitle"><span class="sheet"></span><h2 class="heading">Telaio1.db - default_viewport - default_group - Entity</h2>
              <button class="win" aria-label="Minimize">${icon("min", 14)}</button><button class="win" aria-label="Maximize">${icon("max", 14)}</button><button class="win" aria-label="Close">${icon("close", 14)}</button></div>
            <mesh-viewport class="canvas"></mesh-viewport>
          </section>
          <section class="console">
            <div class="knobs"><button class="mini" aria-label="Close">${icon("closeDark", 7)}</button><button class="mini" aria-label="Dock">${icon("boxDark", 7)}</button><span class="handle"></span></div>
            <div class="lines"><div class="log"><span class="msg">ga_view_zoom_set( 1366.359863 )</span><span class="spin"><button aria-label="Previous">${icon("up", 8)}</button><button aria-label="Next">${icon("down", 8)}</button></span></div>
              <input class="cmd" aria-label="Command"></div>
          </section>
        </div>
        <div class="side">${sideTools.map(([n, gap, on]) => html`<button class=${classMap({ tool: true, gap, on })} aria-label=${n}>${icon(n, 13)}</button>`)}</div>
        <form-panel class="panel"></form-panel>
      </main>
      <footer class="status"><span>For Help, press F1</span><span class="cell"></span></footer>
      <footer class="taskbar">
        <button class="start">${icon("windows", 19)}start</button>
        <button class="task first">${icon("app", 16)}Patran 2010 (M...</button>
        <button class="task on">${icon("app", 16)}Patran 2010 (M...</button>
        <button class="task">${icon("folder", 16)}Telaio1</button>
        <span class="lang">IT</span>
        <div class="tray">${icon("shieldY", 15)}${icon("shieldR", 15)}${icon("sound", 15)}<span class="clock">12.31</span></div>
      </footer>`;
  }
}
